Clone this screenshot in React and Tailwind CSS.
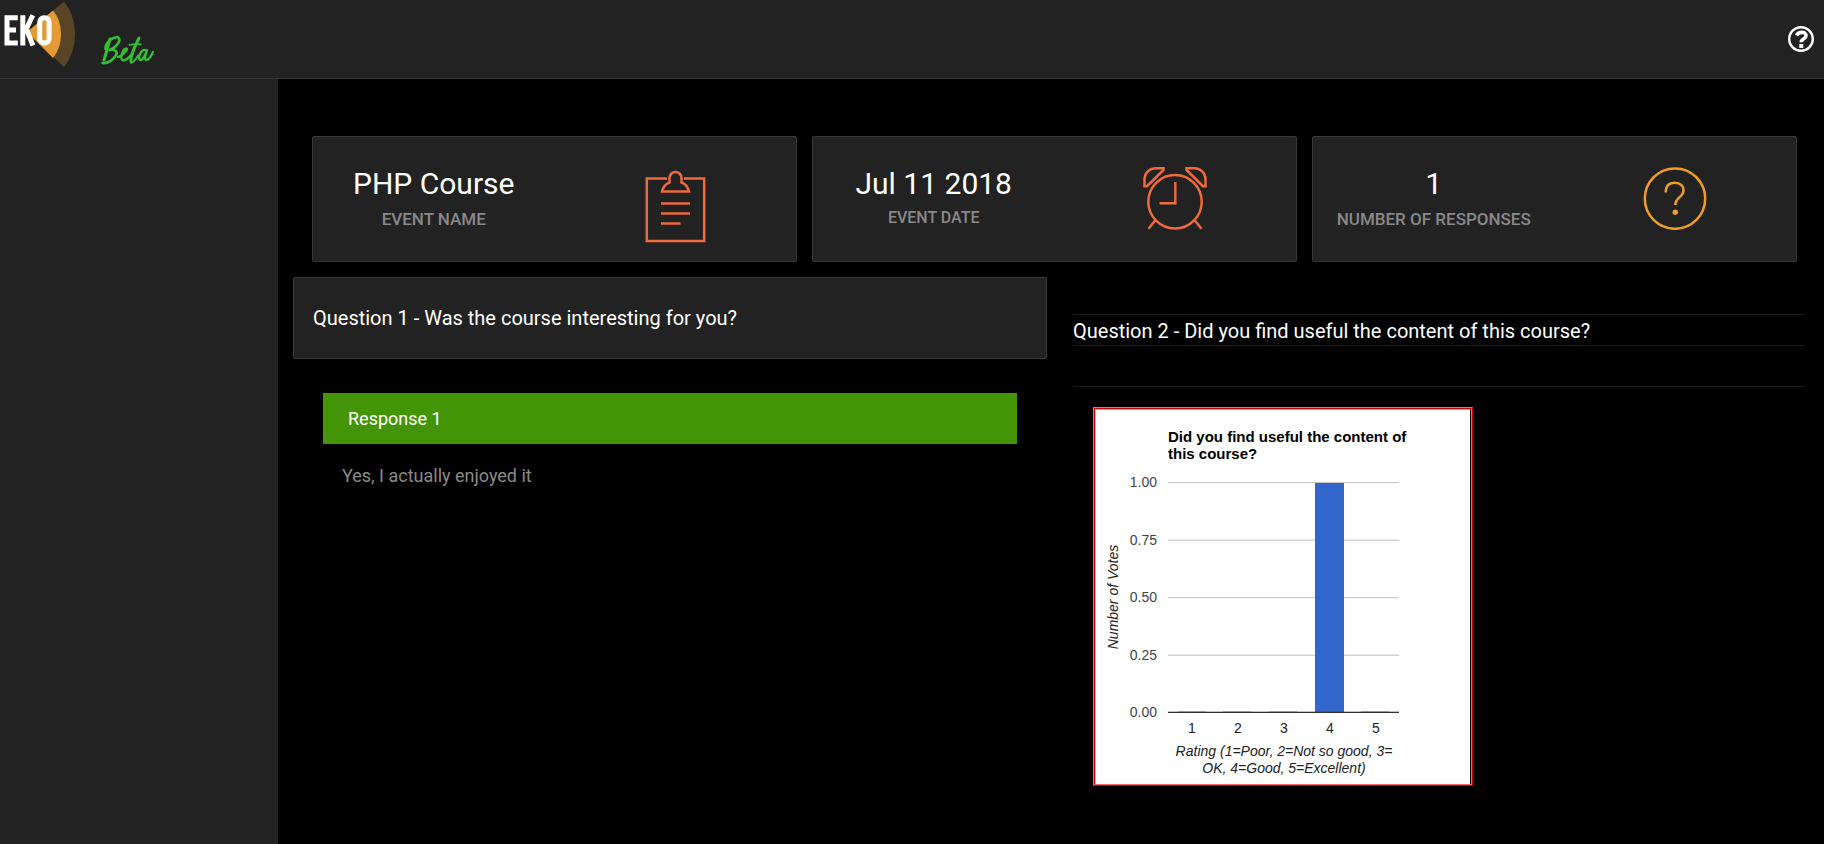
import React from "react";

const RED_ORANGE = "#ef6a3d";

function ClipboardIcon() {
  return (
    <svg width="62" height="74" viewBox="0 0 62 74" fill="none" stroke={RED_ORANGE} strokeWidth="2.500" aria-hidden="true">
      <path d="M23 9.500H2.800V72H60.200V9.500H40" />
      <path d="M18 22.500C19.500 17 22.500 14.500 25.500 13.500V9A6 6 0 0 1 37.500 9V13.500C40.500 14.500 43.500 17 45 22.500Z" />
      <path d="M17 34.500H46M17 44.500H46M17 54.500H36.500" />
    </svg>
  );
}

function ClockIcon() {
  return (
    <svg width="64" height="64" viewBox="0 0 64 64" fill="none" stroke={RED_ORANGE} strokeWidth="2.500" aria-hidden="true">
      <circle cx="32" cy="35.800" r="26.700" />
      <path d="M32.300 16V37.200H16.500" />
      <path d="M12.500 2.200H20.500V4L4 20.200H1.500V13A11 11 0 0 1 12.500 2.200Z" />
      <path d="M51.500 2.200H43.500V4L60 20.200H62.500V13A11 11 0 0 0 51.500 2.200Z" />
      <path d="M12.500 54L5.500 62.700M51.500 54L58.500 62.700" />
    </svg>
  );
}

function QuestionIcon() {
  return (
    <svg width="64" height="64" viewBox="0 0 64 64" fill="none" stroke="#f09c26" strokeWidth="2.500" aria-hidden="true">
      <circle cx="32" cy="32.600" r="30.200" />
      <path d="M22.800 26.500C22.500 20 26 16.700 31.800 16.700S40.500 20 40.500 24.500C40.500 31 32.300 31.500 32.300 39" />
      <circle cx="32.300" cy="46.300" r="2.700" fill="#f09c26" stroke="none" />
    </svg>
  );
}

function Logo() {
  return (
    <svg width="78" height="68" viewBox="0 0 78 68" role="img" aria-label="EKO">
      <path d="M27 32L64 1.500Q75 15 75 34T64 67Z" fill="#5a4426" />
      <path d="M27 32L53 10.500Q61 20 61 34T53 58Z" fill="#e59a38" />
      <g fill="none" stroke="#fff" strokeWidth="5">
        <path d="M17.800 17.700H7V43H17.800M7 30H16" />
        <path d="M22.800 15.200V45.500M32.800 15.200L24.500 33M26 28L33 45.500" />
        <rect x="39.700" y="17.700" width="9.400" height="25.300" rx="4.300" />
      </g>
    </svg>
  );
}

function BetaMark() {
  return (
    <svg width="54" height="32" viewBox="0 0 54 32" fill="none" stroke="#35bd33" strokeLinecap="round" strokeLinejoin="round" role="img" aria-label="Beta">
      <path d="M9 4C7 11 5 19 3 25" strokeWidth="3" />
      <path d="M4.500 14C4 8 10 3 16 2C21 3 18 11 8.500 15C14 13.500 17.500 17 14.500 21C11 26 6 28.500 1.500 28" strokeWidth="2.600" />
      <path d="M17 22C20 21.500 28 14.500 25.500 13.500C21.500 13.500 18.500 24 22 25.500C25.500 25.500 28 22.500 32 18" strokeWidth="2.300" />
      <path d="M38 3C34 11 29 22 30 27" strokeWidth="3" />
      <path d="M30 27.500C33 28 35 24 37 20.500M28.500 9.800C32 9.300 36 9 40 9.300" strokeWidth="1.800" />
      <path d="M44.500 15C40 14 36.500 22.500 39 25C41.500 25.500 44.500 20 46 15.500C44 20 43 25 45.500 25C48.500 24.500 50 21 52 17" strokeWidth="2.400" />
    </svg>
  );
}

function StatCard({ value, label, labelClass, icon }) {
  return (
    <section className="grid h-[126px] grid-cols-2 rounded-xs border border-[#383838] bg-[#222222] text-center">
      <div className="pt-[27px]">
        <p className="text-[30px] leading-10 text-white">{value}</p>
        <h2 className={labelClass}>{label}</h2>
      </div>
      <div className="flex justify-center pt-[29px]">{icon}</div>
    </section>
  );
}

const TICKS = [
  { label: "1.00", y: 72, text: 77 },
  { label: "0.75", y: 129.6, text: 135 },
  { label: "0.50", y: 187, text: 192 },
  { label: "0.25", y: 244.6, text: 250 },
];

function VotesChart() {
  return (
    <svg className="block" width="374" height="374" viewBox="0 0 374 374" fontFamily="Liberation Sans, Arial, sans-serif" fontSize="14" role="img" aria-label="Votes for each rating">
      <g fontWeight="bold" fontSize="15" fill="#000">
        <text x="72" y="32">Did you find useful the content of</text>
        <text x="72" y="49">this course?</text>
      </g>
      {TICKS.map((t) => (
        <g key={t.label}>
          <rect x="72" y={t.y} width="231" height="1.200" fill="#c8c8c8" />
          <text x="61" y={t.text} textAnchor="end" fill="#444">{t.label}</text>
        </g>
      ))}
      <rect x="219" y="73" width="29" height="229" fill="#3366cc" />
      {[82, 127, 173, 265].map((x) => (
        <rect key={x} x={x} y="301" width="28" height="1" fill="#3366cc" opacity="0.4" />
      ))}
      <rect x="72" y="301.700" width="231" height="1.300" fill="#333" />
      <text x="61" y="307" textAnchor="end" fill="#444">0.00</text>
      <g fill="#222" textAnchor="middle">
        {[1, 2, 3, 4, 5].map((n) => (
          <text key={n} x={50 + n * 46} y="323">{n}</text>
        ))}
      </g>
      <g fill="#222" fontStyle="italic" textAnchor="middle">
        <text x="188" y="346">Rating (1=Poor, 2=Not so good, 3=</text>
        <text x="188" y="363">OK, 4=Good, 5=Excellent)</text>
        <text transform="translate(22 187) rotate(-90)">Number of Votes</text>
      </g>
    </svg>
  );
}

export default function App() {
  return (
    <div className="flex min-h-screen flex-col bg-black font-[Roboto,sans-serif] text-white">
      <header className="flex h-[79px] items-start justify-between border-b border-[#383838] bg-[#222222]">
        <div className="flex items-start gap-[23px]">
          <Logo />
          <div className="pt-[35px]"><BetaMark /></div>
        </div>
        <button type="button" aria-label="Help" className="mt-[26px] mr-2.5">
          <svg width="26" height="26" viewBox="0 0 26 26" fill="none" stroke="#fff" aria-hidden="true">
            <circle cx="13" cy="13" r="11.800" strokeWidth="2.400" />
            <path d="M8.500 9.300C10.500 5.700 18 5 18 9.700C18 13 13.300 12.700 13.300 16.300" strokeWidth="3.600" />
            <path d="M13.300 18V22" strokeWidth="4" />
          </svg>
        </button>
      </header>
      <div className="flex grow">
        <aside className="w-[278px] shrink-0 bg-[#222222]" />
        <main className="min-w-0 grow pt-[57px] pr-5 pl-[15px]">
          <div className="mr-[7px] ml-[19px] grid grid-cols-3 gap-[15px]">
            <StatCard value="PHP Course" label="EVENT NAME" labelClass="text-[17px] leading-[30px] font-medium text-[#898989]" icon={<div className="pt-[3px]"><ClipboardIcon /></div>} />
            <StatCard value="Jul 11 2018" label="EVENT DATE" labelClass="text-base leading-7 font-medium text-[#898989]" icon={<ClockIcon />} />
            <StatCard value="1" label="NUMBER OF RESPONSES" labelClass="text-[17px] leading-[30px] font-medium text-[#898989]" icon={<QuestionIcon />} />
          </div>
          <div className="mt-[15px] grid grid-cols-[754fr_731fr] gap-[26px]">
            <section>
              <h2 className="flex h-[82px] items-center rounded-xs border border-[#383838] bg-[#222222] px-[19px] text-xl">
                Question 1 - Was the course interesting for you?
              </h2>
              <div className="px-[30px] pt-[34px]">
                <h3 className="bg-[#449408] px-[25px] py-3 text-lg leading-[27px]">Response 1</h3>
                <p className="px-[19px] pt-[18px] text-lg text-[#898989]">Yes, I actually enjoyed it</p>
              </div>
            </section>
            <section className="pt-[37px]">
              <h2 className="border-y border-[#1c1c1c] pt-0.5 text-xl leading-7">
                Question 2 - Did you find useful the content of this course?
              </h2>
              <hr className="mt-10 border-[#1c1c1c]" />
              <div className="mt-5 ml-5 w-fit border border-t-[#f56a6a] border-r-[#c80000] border-b-[#c80000] border-l-[#f56a6a]">
                <div className="border border-t-[#c80000] border-r-[#f56a6a] border-b-[#f56a6a] border-l-[#c80000]">
                  <div className="border-t border-r border-l border-t-[#b8b8b8] border-r-black border-l-[#b8b8b8] bg-white">
                    <VotesChart />
                  </div>
                </div>
              </div>
            </section>
          </div>
        </main>
      </div>
    </div>
  );
}
